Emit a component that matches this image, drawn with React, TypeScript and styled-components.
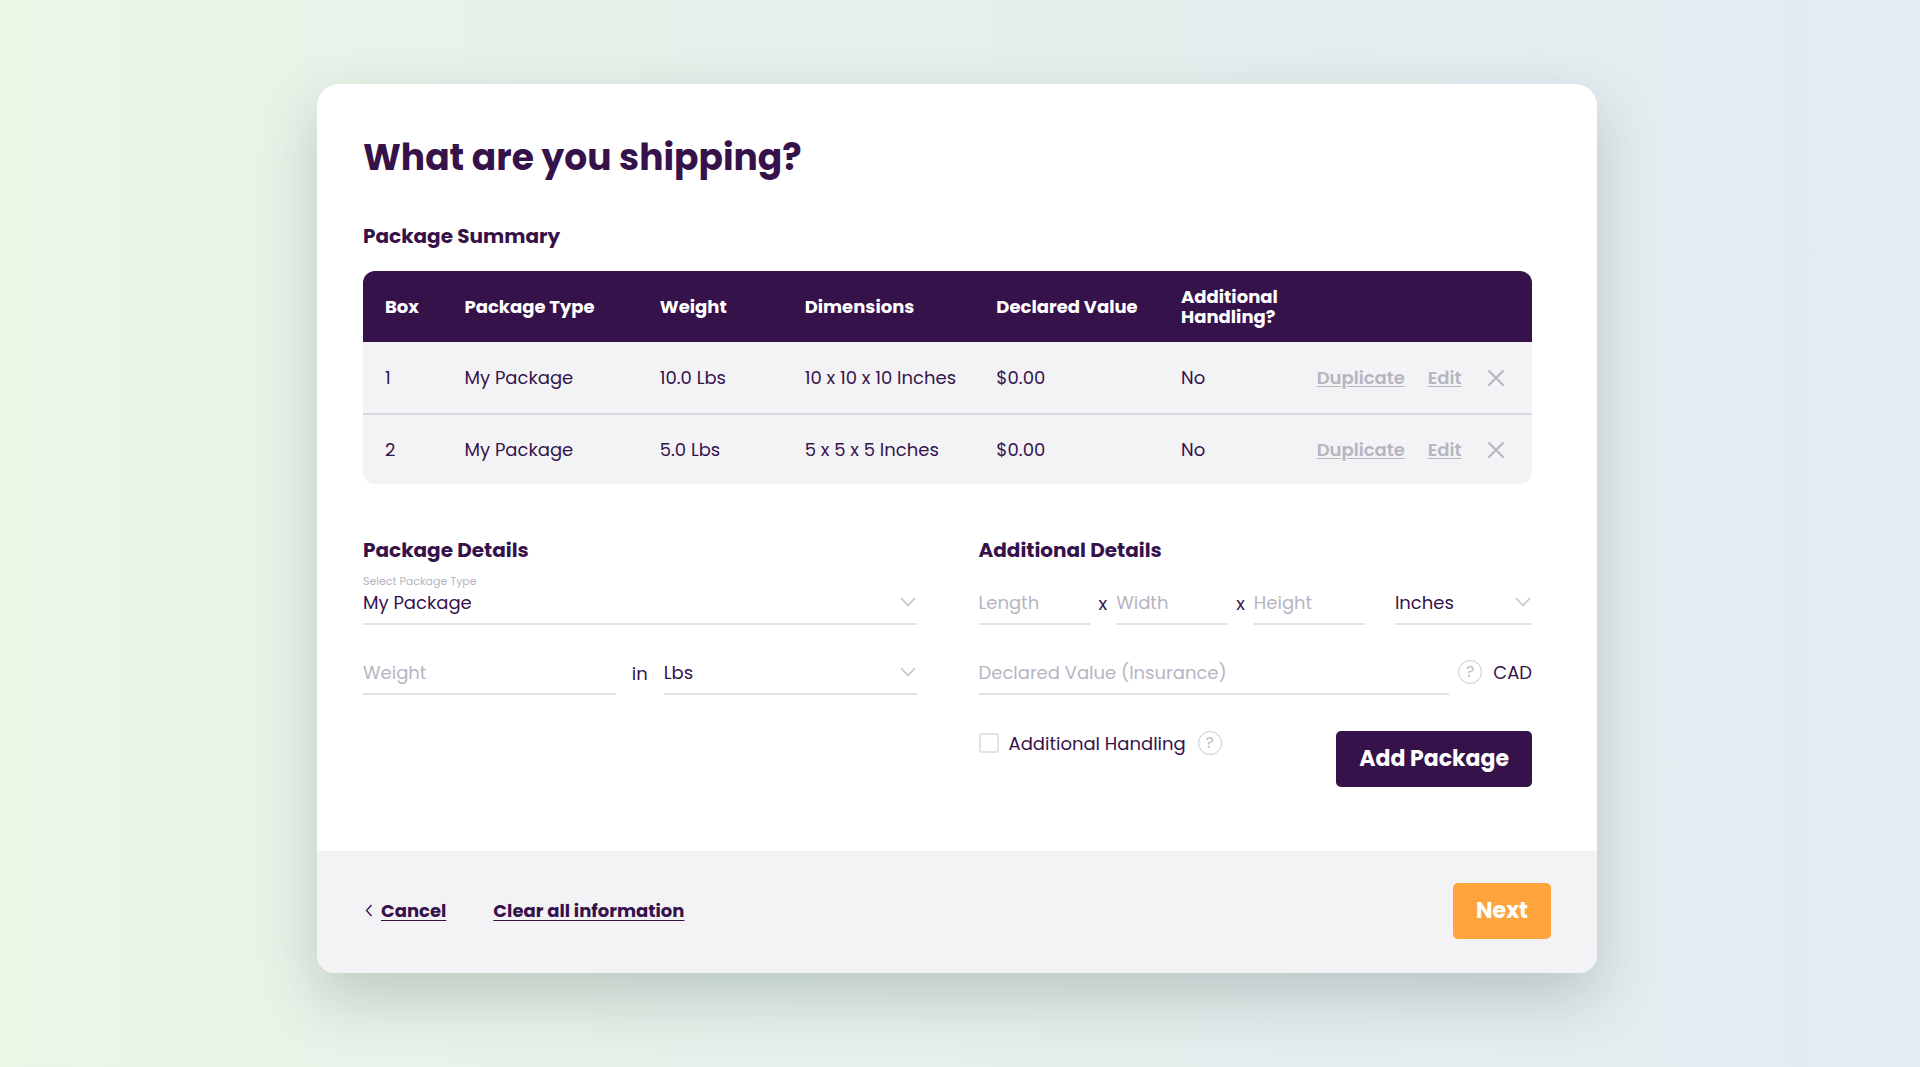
import React, { useState } from 'react';
import styled, { createGlobalStyle } from 'styled-components';

const color = {
  ink: '#36124b',
  muted: '#b5b5c1',
  line: '#e2e2e6',
  surface: '#f3f3f6',
  accent: '#ffa33c',
};

const GlobalStyle = createGlobalStyle`
  *, *::before, *::after { box-sizing: border-box; }
  body {
    margin: 0;
    color: ${color.ink};
    font-family: Poppins, Inter, sans-serif;
    font-size: 18px;
    line-height: 24px;
  }
  button, input, select { font: inherit; color: inherit; }
`;

const Page = styled.div`
  min-height: 100vh;
  padding: 84px 24px 94px 18px;
  background: linear-gradient(90deg, #ebf7e5 0%, #e8f3e9 18%, #e5efec 50%, #e4ecf0 85%, #e3ebf4 100%);
`;

const Card = styled.main`
  max-width: 1280px;
  margin: 0 auto;
  overflow: hidden;
  border-radius: 22px 22px 18px 18px;
  background: #fff;
  box-shadow: 0 24px 60px rgba(30, 60, 50, 0.22);
`;

const Body = styled.div`
  padding: 50px 65px 64px 46px;
`;

const Title = styled.h1`
  margin: 0 0 40px;
  font-size: 36px;
  line-height: 48px;
  font-weight: 700;
`;

const SectionTitle = styled.h2`
  margin: 0;
  font-size: 20px;
  line-height: 28px;
  font-weight: 700;
`;

const SummaryTable = styled.table`
  width: 100%;
  margin: 21px 0 52px;
  border-spacing: 0;
  table-layout: fixed;
  overflow: hidden;
  border-radius: 12px;
  background: ${color.surface};
`;

const Col = styled.col<{ $share: number }>`
  width: ${({ $share }) => $share}%;
`;

const HeadCell = styled.th`
  height: 71px;
  padding: 0 0 0 22px;
  background: ${color.ink};
  color: #fff;
  font-weight: 700;
  line-height: 20px;
  text-align: left;
`;

const Cell = styled.td`
  height: 71px;
  padding: 0 0 0 22px;
  white-space: nowrap;

  tr + tr > & {
    border-top: 2px solid #d9d8e1;
  }
`;

const RowActions = styled.div`
  display: flex;
  align-items: center;
  gap: 23px;
  padding-right: 26px;
`;

const RowLink = styled.button`
  padding: 0;
  border: 0;
  background: none;
  color: ${color.muted};
  font-weight: 600;
  text-decoration: underline;
  text-underline-offset: 2px;
  cursor: pointer;
`;

const RemoveButton = styled.button`
  display: flex;
  margin-left: auto;
  padding: 0;
  border: 0;
  background: none;
  color: ${color.muted};
  cursor: pointer;
`;

const Form = styled.form`
  display: grid;
  grid-template-columns: 1fr 1fr;
  gap: 62px;
`;

const Line = styled.div<{ $gap: number; $height?: number }>`
  display: flex;
  align-items: flex-end;
  gap: ${({ $gap }) => $gap}px;
  height: ${({ $height = 70 }) => $height}px;
`;

const Dimensions = styled.div`
  display: flex;
  flex: 386 1 0;
  align-items: flex-end;
  gap: 9px;
`;

const Field = styled.div<{ $grow?: number }>`
  position: relative;
  flex: ${({ $grow = 1 }) => $grow} 1 0;
  min-width: 0;
`;

const FloatingLabel = styled.label`
  display: block;
  color: ${color.muted};
  font-size: 11px;
  line-height: 16px;
`;

const controlStyle = `
  display: block;
  width: 100%;
  height: 36px;
  border: 0;
  border-bottom: 2px solid ${color.line};
  border-radius: 0;
  outline: 0;
  background: transparent;
`;

const TextInput = styled.input`
  ${controlStyle}
  padding: 0 0 8px;
  &::placeholder { color: ${color.muted}; opacity: 1; }
`;

const SelectInput = styled.select`
  ${controlStyle}
  padding: 0 0 6px;
  appearance: none;
`;

const SelectArrow = styled.svg`
  position: absolute;
  right: 1px;
  bottom: 18px;
  pointer-events: none;
`;

const Joiner = styled.span`
  padding-bottom: 9px;
`;

const HelpButton = styled.button`
  flex: none;
  width: 24px;
  height: 24px;
  margin: 0 0 2px;
  padding: 0;
  border: 1px solid #c9c9d0;
  border-radius: 50%;
  background: none;
  color: #bdbdc8;
  font-size: 16px;
  line-height: 22px;
  text-align: center;
  cursor: pointer;
`;

const Currency = styled.div`
  display: flex;
  align-items: center;
  gap: 11px;
  padding-bottom: 9px;
`;

const HandlingRow = styled.div`
  display: flex;
  align-items: flex-start;
  justify-content: space-between;
  padding-top: 36px;
`;

const HandlingOption = styled.div`
  display: flex;
  align-items: center;
  gap: 12px;
`;

const CheckLabel = styled.label`
  display: flex;
  align-items: center;
  gap: 10px;
`;

const Checkbox = styled.input`
  appearance: none;
  width: 20px;
  height: 20px;
  margin: 0 0 2px;
  border: 2px solid ${color.line};
  border-radius: 3px;
  &:checked { background: ${color.ink}; }
`;

const ActionButton = styled.button<{ $tone: string }>`
  height: 56px;
  padding: 0 23px;
  border: 0;
  border-radius: 5px;
  background: ${({ $tone }) => $tone};
  color: #fff;
  font-size: 22px;
  font-weight: 700;
  cursor: pointer;
`;

const Footer = styled.footer`
  display: flex;
  align-items: center;
  gap: 47px;
  padding: 32px 46px 34px;
  background: ${color.surface};
`;

const FooterLink = styled.a`
  display: flex;
  align-items: center;
  gap: 8px;
  color: ${color.ink};
  font-weight: 700;
  text-decoration: underline;
  text-decoration-thickness: 1px;
  text-underline-offset: 3px;
`;

const FooterEnd = styled.div`
  margin-left: auto;
`;

const boxes = [
  { type: 'My Package', weight: '10.0 Lbs', size: '10 x 10 x 10 Inches', value: '$0.00', handling: 'No' },
  { type: 'My Package', weight: '5.0 Lbs', size: '5 x 5 x 5 Inches', value: '$0.00', handling: 'No' },
];

const columnShares = [6.8, 16.7, 12.4, 16.4, 15.8, 11.6, 20.3];

type DropdownProps = { id: string; options: string[]; label?: string; hint?: string; grow?: number };

function Dropdown({ id, options, label, hint, grow }: DropdownProps) {
  return (
    <Field $grow={grow}>
      {label && <FloatingLabel htmlFor={id}>{label}</FloatingLabel>}
      <SelectInput id={id} aria-label={hint}>
        {options.map((option) => (
          <option key={option}>{option}</option>
        ))}
      </SelectInput>
      <SelectArrow width="16" height="10" viewBox="0 0 16 10" fill="none" aria-hidden="true">
        <path d="M1 1l7 7.5L15 1" stroke="#c6c6cd" strokeWidth="1.7" />
      </SelectArrow>
    </Field>
  );
}

function TextField({ name, grow }: { name: string; grow?: number }) {
  return (
    <Field $grow={grow}>
      <TextInput type="text" placeholder={name} aria-label={name} />
    </Field>
  );
}

export default function App() {
  const [extraHandling, setExtraHandling] = useState(false);

  return (
    <>
      <GlobalStyle />
      <Page>
        <Card>
          <Body>
            <Title>What are you shipping?</Title>
            <SectionTitle id="summary">Package Summary</SectionTitle>
            <SummaryTable aria-labelledby="summary">
              <colgroup>
                {columnShares.map((share, index) => (
                  <Col key={index} $share={share} />
                ))}
              </colgroup>
              <thead>
                <tr>
                  <HeadCell>Box</HeadCell>
                  <HeadCell>Package Type</HeadCell>
                  <HeadCell>Weight</HeadCell>
                  <HeadCell>Dimensions</HeadCell>
                  <HeadCell>Declared Value</HeadCell>
                  <HeadCell>Additional Handling?</HeadCell>
                  <HeadCell aria-label="Actions" />
                </tr>
              </thead>
              <tbody>
                {boxes.map((box, index) => (
                  <tr key={index}>
                    <Cell>{index + 1}</Cell>
                    <Cell>{box.type}</Cell>
                    <Cell>{box.weight}</Cell>
                    <Cell>{box.size}</Cell>
                    <Cell>{box.value}</Cell>
                    <Cell>{box.handling}</Cell>
                    <Cell>
                      <RowActions>
                        <RowLink type="button">Duplicate</RowLink>
                        <RowLink type="button">Edit</RowLink>
                        <RemoveButton type="button" aria-label={`Remove box ${index + 1}`}>
                          <svg width="20" height="20" viewBox="0 0 20 20" fill="none" aria-hidden="true">
                            <path d="M3 3l14 14M17 3L3 17" stroke="currentColor" strokeWidth="2" strokeLinecap="round" />
                          </svg>
                        </RemoveButton>
                      </RowActions>
                    </Cell>
                  </tr>
                ))}
              </tbody>
            </SummaryTable>

            <Form onSubmit={(event) => event.preventDefault()}>
              <div>
                <SectionTitle>Package Details</SectionTitle>
                <Line $gap={0} $height={61}>
                  <Dropdown id="package-type" label="Select Package Type" options={['My Package']} />
                </Line>
                <Line $gap={16}>
                  <TextField name="Weight" />
                  <Joiner>in</Joiner>
                  <Dropdown id="weight-unit" hint="Weight unit" options={['Lbs', 'Kg']} />
                </Line>
              </div>

              <div>
                <SectionTitle>Additional Details</SectionTitle>
                <Line $gap={30} $height={61}>
                  <Dimensions>
                    <TextField name="Length" />
                    <Joiner>x</Joiner>
                    <TextField name="Width" />
                    <Joiner>x</Joiner>
                    <TextField name="Height" />
                  </Dimensions>
                  <Dropdown id="size-unit" hint="Dimension unit" options={['Inches', 'Cm']} grow={137} />
                </Line>
                <Line $gap={9}>
                  <TextField name="Declared Value (Insurance)" />
                  <Currency>
                    <HelpButton type="button" aria-label="About declared value">?</HelpButton>
                    <span>CAD</span>
                  </Currency>
                </Line>
                <HandlingRow>
                  <HandlingOption>
                    <CheckLabel>
                      <Checkbox
                        type="checkbox"
                        checked={extraHandling}
                        onChange={(event) => setExtraHandling(event.target.checked)}
                      />
                      Additional Handling
                    </CheckLabel>
                    <HelpButton type="button" aria-label="About additional handling">?</HelpButton>
                  </HandlingOption>
                  <ActionButton $tone={color.ink}>Add Package</ActionButton>
                </HandlingRow>
              </div>
            </Form>
          </Body>

          <Footer>
            <FooterLink href="#cancel">
              <svg width="10" height="14" viewBox="0 0 10 14" fill="none" aria-hidden="true">
                <path d="M8.5 1L3.5 6.5l5 5.500" stroke="currentColor" strokeWidth="1.3" />
              </svg>
              Cancel
            </FooterLink>
            <FooterLink href="#clear">Clear all information</FooterLink>
            <FooterEnd>
              <ActionButton $tone={color.accent}>Next</ActionButton>
            </FooterEnd>
          </Footer>
        </Card>
      </Page>
    </>
  );
}
